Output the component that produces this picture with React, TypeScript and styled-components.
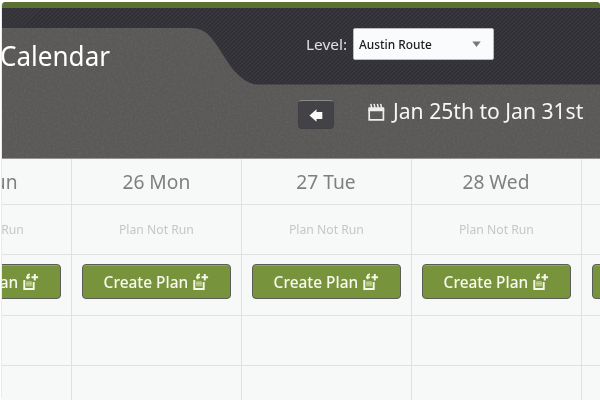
import React from "react";
import styled, { createGlobalStyle } from "styled-components";

const GlobalStyle = createGlobalStyle`
  * { box-sizing: border-box; }
  body {
    margin: 0;
    background: #fff;
    overflow: hidden;
    font-family: "Noto Sans", "Open Sans", sans-serif;
  }
`;

const Page = styled.main`
  width: 600px;
  height: 400px;
  padding: 2px 0 0 1px;
  overflow: hidden;
`;

const Card = styled.div`
  height: 398px;
  border-left: 1px solid #e9ebeb;
  border-radius: 4px 3px 0 4px;
  overflow: hidden;
  background: #f7f9f9;
`;

const Header = styled.header`
  position: relative;
  height: 157px;
  border-top: 6px solid #5b7031;
  border-bottom: 1px solid #939493;
  background: repeating-linear-gradient(135deg, #313036 0 1.4px, #38373d 1.4px 2.83px);
`;

const Backdrop = styled.svg`
  position: absolute;
  inset: 0;
  display: block;
`;

const TopRow = styled.div`
  position: relative;
  height: 76px;
  display: flex;
  align-items: flex-start;
`;

const NavRow = styled.div`
  position: relative;
  height: 74px;
  display: flex;
  align-items: flex-start;
  padding: 16px 0 0 296px;
`;

const Fit = styled.span<{ $x: number }>`
  display: block;
  white-space: nowrap;
  transform: scaleX(${(p) => p.$x});
  transform-origin: left center;
`;

const Title = styled.h1`
  width: 305px;
  margin: 30px 0 0 -2px;
  font-size: 27px;
  line-height: 36px;
  font-weight: 400;
  color: #fff;
`;

const LevelLabel = styled.label`
  width: 48px;
  margin-top: 26px;
  padding-left: 1px;
  font-size: 15px;
  line-height: 20px;
  color: #e0e0e3;
`;

const Select = styled.button`
  width: 141px;
  height: 32px;
  margin-top: 20px;
  padding: 0 12px 0 5px;
  display: flex;
  align-items: center;
  justify-content: space-between;
  border: 1px solid #b9bbbe;
  border-radius: 2px;
  background: #fafbfd;
  color: #1c1c1e;
  font: 500 12.5px/30px "Noto Sans", sans-serif;

  span { margin-top: 1px; }
`;

const BackButton = styled.button`
  width: 36px;
  height: 29px;
  padding: 1px 0 0;
  display: flex;
  align-items: center;
  justify-content: center;
  border: 1px solid #403f43;
  border-top-color: #8b8b8c;
  border-radius: 4px;
  background: #434246;
`;

const DateRange = styled.div`
  display: flex;
  align-items: flex-start;
  margin-left: 34px;
  color: #f6f6f6;
  font-size: 21px;
  line-height: 28px;

  svg { margin: 3px 8px 0 0; }
  span { margin-top: -3px; }
`;

const Week = styled.section`
  display: grid;
  grid-template-columns: 70px repeat(4, 170px);
  grid-template-rows: 46px 50px 61px 50px 50px;
`;

const Cell = styled.div`
  display: flex;
  align-items: center;
  justify-content: center;
  min-width: 0;
  border-right: 1px solid #dfe2e2;
  border-bottom: 1px solid #dfe2e2;
  overflow: hidden;

  &:nth-child(5n + 1) { justify-content: flex-end; }
  &:nth-child(5n + 1) > * { margin-right: 10px; flex: none; }
  &:nth-child(5n) { justify-content: flex-start; padding-left: 10px; }
`;

const Day = styled.div`
  margin-right: 1px;
  font-size: 20px;
  line-height: 28px;
  color: #7e8080;
  span { transform-origin: center; }

  ${Cell}:first-child > & { margin-right: 52px; }
`;

const Status = styled.div`
  margin-right: 1px;
  font-size: 12.5px;
  line-height: 18px;
  color: #c4c7c6;
  span { transform-origin: center; }

  ${Cell}:nth-child(6) > & { margin-right: 46px; }
`;

const PlanButton = styled.button`
  flex: none;
  width: 149px;
  height: 35px;
  margin: 0 1px 7px 0;
  padding: 0 0 0 19px;
  display: flex;
  align-items: center;
  border: 1px solid #5a5d53;
  border-radius: 4px;
  background: #77933c;
  box-shadow: inset 0 1px #93a568;
  color: #f7faed;
  font: 500 16px/24px "Noto Sans", sans-serif;
`;

const PlanLabel = styled.span`
  width: 91px;
  margin-top: 1px;
`;

const NewPlanIcon = () => (
  <svg width="16" height="18" viewBox="0 0 16 18" fill="none" aria-hidden="true">
    <path d="M1.3 7V15.9H10.7V9" stroke="#f4f8e5" strokeWidth="2" />
    <path d="M3 8.2H9V13.5H3z" fill="#a9bb77" />
    <path d="M3 10.5h6M5 8v5M7.2 8v5" stroke="#c7d4a2" strokeWidth=".7" />
    <path d="M4.6 6.2V3.2Q4.6 1.3 7 1.3M3 4.3H7" stroke="#f4f8e5" strokeWidth="1.7" />
    <path d="M11.8 1v6.6M8.5 4.3h6.6" stroke="#f4f8e5" strokeWidth="2" />
  </svg>
);

const days = [
  { label: "25 Sun" },
  { label: "26 Mon" },
  { label: "27 Tue" },
  { label: "28 Wed" },
  { label: "" },
];

export default function App() {
  return (
    <Page>
      <GlobalStyle />
      <Card>
        <Header>
          <Backdrop width="598" height="150" viewBox="0 0 598 150">
            <defs>
              <filter id="grain" x="0" y="0" width="100%" height="100%">
                <feTurbulence type="fractalNoise" baseFrequency="0.45" numOctaves="2" seed="4" />
                <feColorMatrix values="0 0 0 0 .2  0 0 0 0 .2  0 0 0 0 .18  1.8 0 0 0 -.7" />
                <feComposite in2="SourceGraphic" operator="in" />
              </filter>
              <path
                id="tab"
                d="M0 20H186C202 20 206 25 214 36L229 59Q243 76 255 76.5H598V150H0Z"
              />
            </defs>
            <use href="#tab" fill="#5b5958" />
            <use href="#tab" filter="url(#grain)" opacity=".28" />
          </Backdrop>
          <TopRow>
            <Title><Fit $x={0.965}>Calendar</Fit></Title>
            <LevelLabel><Fit $x={1.03}>Level:</Fit></LevelLabel>
            <Select>
              <Fit $x={0.95}>Austin Route</Fit>
              <svg width="9" height="6" viewBox="0 0 9 6" aria-hidden="true">
                <path d="M0.3.5h8.4L4.5 6z" fill="#77787b" />
              </svg>
            </Select>
          </TopRow>
          <NavRow>
            <BackButton aria-label="Previous week">
              <svg width="14" height="13" viewBox="0 0 14 13">
                <path d="M.5 6.5 7.5.3V3H13.3V10H7.5V12.7Z" fill="#fafafa" />
              </svg>
            </BackButton>
            <DateRange>
              <svg width="17" height="18" viewBox="0 0 17 18" fill="none" aria-hidden="true">
                <path d="M1.2 6.5h14.2v10.4H1.2z" stroke="#eeeeec" strokeWidth="1.7" />
                <path d="M.4 4.2h15.8v4H.4z" fill="#eeeeec" />
                <path d="m2.8.8.9 4M6.1.8l.9 4M9.4.8l.9 4M12.7.8l.9 4" stroke="#eeeeec" strokeWidth="1.5" />
              </svg>
              <Fit $x={1.005}>Jan 25th to Jan 31st</Fit>
            </DateRange>
          </NavRow>
        </Header>
        <Week>
          {days.map((d, i) => (
            <Cell key={`d${i}`}><Day><Fit $x={0.96}>{d.label}</Fit></Day></Cell>
          ))}
          {days.map((d, i) => (
            <Cell key={`s${i}`}><Status>{d.label && <Fit $x={0.975}>Plan Not Run</Fit>}</Status></Cell>
          ))}
          {days.map((_, i) => (
            <Cell key={`p${i}`}>
              <PlanButton>
                <PlanLabel><Fit $x={0.965}>Create Plan</Fit></PlanLabel>
                <NewPlanIcon />
              </PlanButton>
            </Cell>
          ))}
          {Array.from({ length: 10 }, (_, i) => <Cell key={`e${i}`} />)}
        </Week>
      </Card>
    </Page>
  );
}
